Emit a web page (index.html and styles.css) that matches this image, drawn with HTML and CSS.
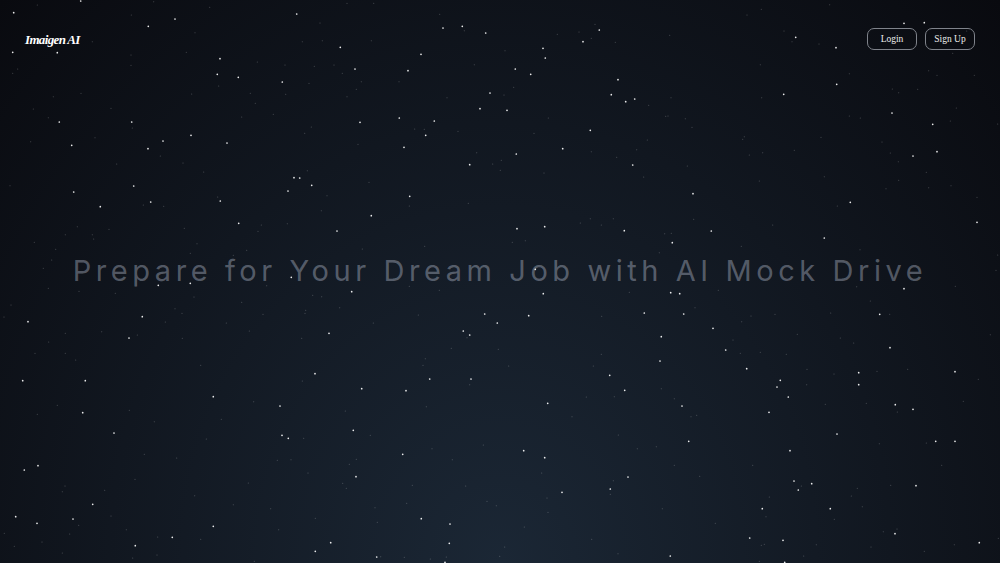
FILE: index.html
```html
<!DOCTYPE html>
<html lang="en">
<head>
<meta charset="utf-8">
<title>Imaigen AI</title>
<link rel="stylesheet" href="styles.css">
</head>
<body>
<div class="page">
  <svg class="stars" id="stars" width="1000" height="563" viewBox="0 0 1000 563" aria-hidden="true"></svg>
  <header class="topbar">
    <a class="logo" href="#">Imaigen AI</a>
    <nav class="actions">
      <a class="btn" href="#">Login</a>
      <a class="btn" href="#">Sign Up</a>
    </nav>
  </header>
  <main class="hero">
    <h1 class="headline">Prepare for Your Dream Job with AI Mock Drive</h1>
  </main>
</div>
<script src="script.js"></script>
</body>
</html>
```
FILE: styles.css
```css
* { box-sizing: border-box; }
html, body { margin: 0; height: 100%; }
body { overflow: hidden; background: #090a0f; }
.page {
  position: relative;
  width: 1000px;
  height: 563px;
  overflow: hidden;
  display: flex;
  flex-direction: column;
  background: radial-gradient(ellipse at bottom, #1b2735 0%, #090a0f 100%);
}
.stars { position: absolute; left: 0; top: 0; }
.star-bright { fill: #fff; opacity: .92; }
.star-faint { fill: #fff; opacity: .26; }
.topbar {
  position: relative;
  display: flex;
  justify-content: space-between;
  align-items: center;
  padding: 28px 25px;
}
.logo {
  font: italic 700 13px "Liberation Serif", serif;
  letter-spacing: -.65px;
  padding-top: 1px;
  color: #fff;
  text-decoration: none;
}
.actions { display: flex; gap: 8px; }
.btn {
  display: flex;
  align-items: center;
  justify-content: center;
  width: 50px;
  height: 22px;
  border: 1px solid #7f838b;
  border-radius: 7px;
  font: 9.5px "Liberation Serif", serif;
  color: #eceded;
  text-decoration: none;
}
.hero {
  position: relative;
  display: flex;
  justify-content: center;
  padding-top: 175px;
}
.headline {
  margin: 0;
  font: 400 29px Inter, sans-serif;
  letter-spacing: 4.57px;
  white-space: nowrap;
  color: rgba(228, 236, 255, .33);
}
```
FILE: script.js
```js
var panels = [
  [0, 0,
   "41,38 38,157 172,158 445,79 525,57 652,223 715,232 660,176 178,366 395,366 489,423 573,406 681,429 847,246 444,446 215,436 221,576 301,620 452,606 661,603 716,670 882,533 899,534 935,556 401,558 864,573 874,832 242,3 890,42",
   "112,15 461,5 629,22 394,45 585,98 559,157 277,125 393,165 393,196 53,207 38,220 243,280 160,290 100,327 333,325 145,353 772,186 855,195 943,199 927,250 857,283 751,280 766,310 575,282 656,258 820,343 725,351 934,381 914,400 397,384 285,413 92,425 481,468 549,489 350,492 611,516 30,557 922,512 981,587 964,632 430,615 491,619 653,591 232,680 196,704 277,704 281,717 327,688 553,685 784,675 774,694 862,671 103,727 167,748 155,780 130,805 591,731 571,760 740,751 700,766 907,125 967,122 960,69"],
  [333, 0,
   "22,142 264,163 388,79 330,84 458,99 225,212 66,207 799,90 750,125 630,145 637,174 547,207 593,223 855,239 471,279 835,284 878,305 905,297 441,326 522,331 199,354 81,367 304,363 278,406 772,391 213,442 689,446 550,462 410,494 899,495 230,589 115,647 12,693 552,686 635,680 874,692 607,808",
   "42,10 122,10 320,43 394,92 115,122 673,103 738,96 786,73 775,115 847,127 516,152 3,195 28,220 85,245 70,268 42,290 198,245 424,194 542,262 513,285 342,293 947,316 998,349 646,354 245,387 274,388 375,394 603,400 943,420 75,433 431,458 911,449 851,472 505,481 479,492 502,511 633,519 932,531 108,547 229,618 406,610 742,669 772,656 841,656 805,675 995,701 538,727 577,722 88,747 275,739 979,758 775,455"],
  [666, 0,
   "714,70 775,68 389,112 510,143 512,253 353,283 678,339 800,373 741,468 813,455 81,581 553,607 136,693 475,714 933,667 19,728",
   "286,28 243,45 491,14 354,93 11,106 459,132 378,125 283,194 550,221 788,212 813,226 925,226 679,267 698,278 755,268 287,293 15,293 871,324 6,348 58,356 550,348 583,354 853,363 78,382 995,372 235,410 230,418 465,412 648,426 385,451 250,465 290,458 673,459 697,485 64,498 781,517 475,530 280,543 698,541 660,566 788,563 855,557 933,592 514,618 83,658 320,675 16,700 226,739 582,749 995,765 990,811 860,160 902,93"],
  [0, 281,
   "427,107 84,122 387,171 987,157 68,299 256,299 945,278 640,347 840,375 248,395 342,456 846,463 865,472 114,554 73,567 278,670 47,707 111,727 219,714 640,736 517,769 406,794 946,811 992,785 475,13 571,7",
   "145,22 237,31 346,37 582,48 938,43 965,47 33,72 12,108 525,83 546,97 725,64 917,88 915,97 789,100 496,123 679,126 196,157 305,152 412,162 146,183 547,172 748,150 905,172 105,217 196,217 227,237 602,253 907,300 172,373 112,400 388,388 761,362 463,422 664,415 619,474 911,472 433,520 530,531 832,538 873,536 924,576 405,595 745,606 195,615 187,632 314,628 584,644 700,671 812,683 333,705 946,712 236,733 209,759 379,746 836,746 13,757 126,783 43,796 473,768 602,775 187,816 398,831 471,822 763,841 800,14"],
  [333, 281,
   "56,32 631,38 455,99 587,104 934,96 493,126 391,150 410,162 985,167 981,240 830,283 875,328 414,294 290,294 86,323 219,329 644,367 61,448 209,520 572,509 635,530 885,588 69,587 687,634 832,624 265,713 351,729 349,787 131,828 336,844",
   "889,34 229,16 319,28 20,80 256,102 121,126 806,106 402,170 355,202 496,205 805,220 277,233 270,253 781,255 527,255 985,323 844,347 760,348 410,311 280,377 37,390 717,407 112,463 856,462 451,492 297,503 913,503 970,497 70,535 358,536 49,550 626,576 841,599 29,607 238,613 398,615 40,622 832,640 642,651 462,661 490,674 221,667 126,680 645,694 988,683 133,724 574,738 776,775 515,798 855,818 143,827 214,829 292,834 340,828 500,826"],
  [666, 281,
   "41,38 14,35 714,23 53,99 641,100 141,142 179,207 672,200 242,263 578,275 867,272 343,298 333,318 578,311 367,348 688,371 741,385 48,375 309,394 513,459 68,481 809,481 867,481 372,509 384,600 437,608 397,627 750,614 289,683 493,683 251,771 351,778 687,758 940,785 13,825 356,844",
   "157,28 572,17 868,16 613,60 87,80 255,105 327,100 494,96 671,100 227,122 394,160 973,161 201,177 523,171 563,186 223,217 283,214 361,220 423,265 633,271 725,265 504,279 937,295 422,311 25,353 478,370 601,367 892,361 92,403 75,407 694,393 640,488 781,486 25,553 260,553 827,553 101,586 406,615 674,613 574,622 556,645 310,648 589,677 300,707 505,715 148,727 652,752 693,744 286,793 295,790 451,791 615,798 865,791 775,811 997,772 413,825 280,841"]
];

var svg = document.getElementById("stars");
var NS = "http://www.w3.org/2000/svg";

function plot(list, ox, oy, cls, r) {
  list.split(" ").forEach(function (pair) {
    var p = pair.split(",");
    var c = document.createElementNS(NS, "circle");
    c.setAttribute("cx", (ox + p[0] / 3).toFixed(1));
    c.setAttribute("cy", (oy + p[1] / 3).toFixed(1));
    c.setAttribute("r", r);
    c.setAttribute("class", cls);
    svg.appendChild(c);
  });
}

panels.forEach(function (p) {
  plot(p[2], p[0], p[1], "star-bright", 0.85);
  plot(p[3], p[0], p[1], "star-faint", 0.55);
});
```
